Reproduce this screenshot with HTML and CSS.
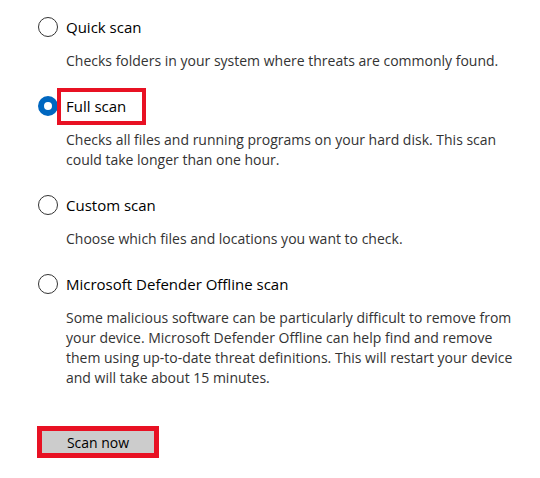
FILE: index.html
```html
<!DOCTYPE html>
<html>
<head>
<meta charset="utf-8">
<link rel="stylesheet" href="styles.css">
</head>
<body>
<div class="panel">
  <div class="option">
    <div class="row"><span class="radio"></span><span class="label">Quick scan</span></div>
    <p class="desc">Checks folders in your system where threats are commonly found.</p>
  </div>
  <div class="option">
    <div class="row"><span class="radio checked"></span><span class="label boxed">Full scan</span></div>
    <p class="desc">Checks all files and running programs on your hard disk. This scan could take longer than one hour.</p>
  </div>
  <div class="option">
    <div class="row"><span class="radio"></span><span class="label">Custom scan</span></div>
    <p class="desc">Choose which files and locations you want to check.</p>
  </div>
  <div class="option">
    <div class="row"><span class="radio"></span><span class="label">Microsoft Defender Offline scan</span></div>
    <p class="desc">Some malicious software can be particularly difficult to remove from your device. Microsoft Defender Offline can help find and remove them using up-to-date threat definitions. This will restart your device and will take about 15 minutes.</p>
  </div>
  <div class="actions">
    <button class="scan-btn">Scan now</button>
  </div>
</div>
</body>
</html>
```
FILE: styles.css
```css
html, body {
  margin: 0;
  padding: 0;
  background: #ffffff;
}
body {
  font-family: "Open Sans", "Noto Sans", sans-serif;
  font-size: 14px;
  color: #000;
}
.panel {
  padding: 15px 0 0 38px;
  width: 490px;
}
.option {
  margin-bottom: 23px;
}
.row {
  display: flex;
  align-items: center;
  height: 24px;
}
.radio {
  box-sizing: border-box;
  width: 20px;
  height: 20px;
  border-radius: 50%;
  border: 1px solid #333;
  flex: none;
  margin-right: 8px;
}
.radio.checked {
  border: 6px solid #0067c0;
}
.label {
  font-size: 15px;
  line-height: 24px;
  color: #000;
}
.label.boxed {
  border: 4px solid #e81123;
  padding: 2px 16px 3px 5px;
  margin-left: -9px;
}
.desc {
  margin: 12px 0 0 28px;
  font-size: 14px;
  line-height: 20px;
  color: #333;
}
.actions {
  padding-top: 15px;
}
.scan-btn {
  box-sizing: border-box;
  display: block;
  font-family: inherit;
  font-size: 14px;
  color: #000;
  background: #cccccc;
  border: 5px solid #e81123;
  margin-left: -1px;
  width: 122px;
  height: 32px;
  padding: 0;
}
```
